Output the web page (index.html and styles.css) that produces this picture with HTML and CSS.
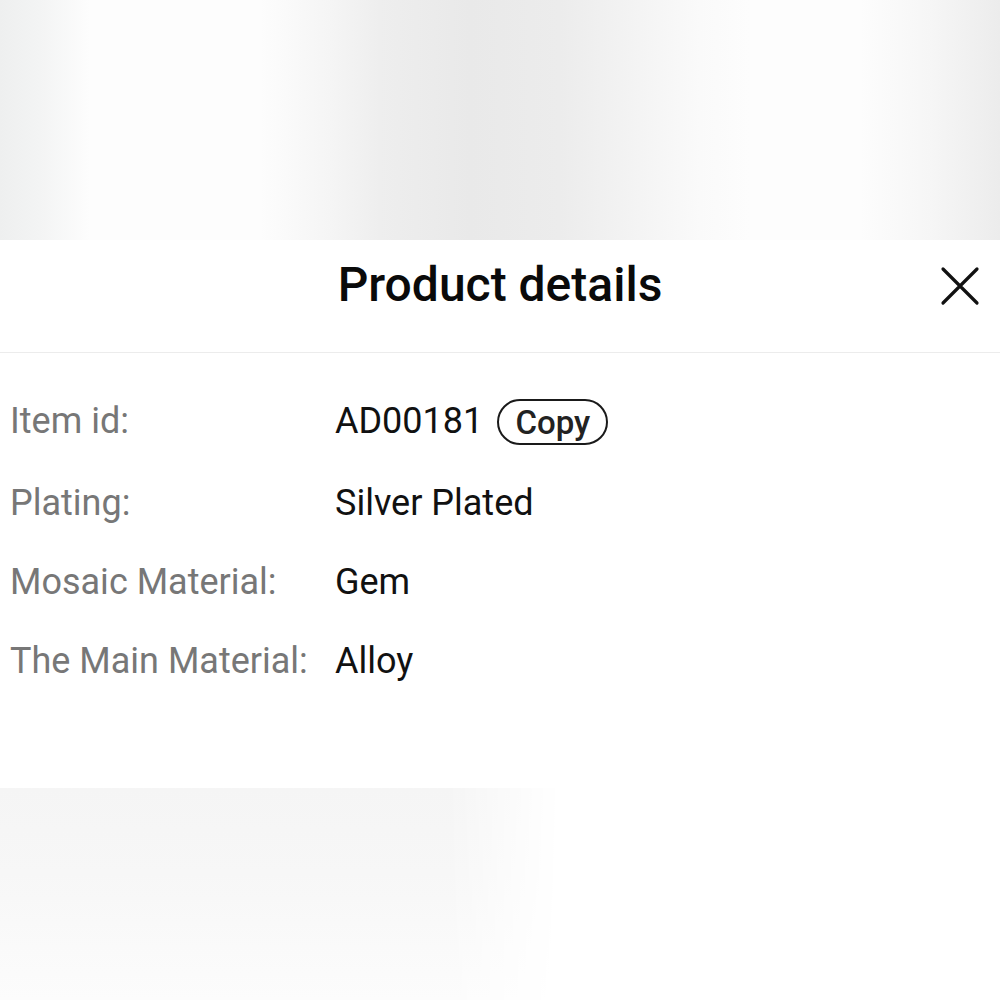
FILE: index.html
```html
<!DOCTYPE html>
<html lang="en">
<head>
<meta charset="utf-8">
<title>Product details</title>
<link rel="stylesheet" href="styles.css">
</head>
<body>
<div class="backdrop-top"></div>
<section class="sheet">
  <header class="sheet-header">
    <h1 class="sheet-title">Product details</h1>
    <button class="close-btn" aria-label="Close">
      <svg viewBox="0 0 40 40" width="40" height="40"><path d="M3 3 L37 37 M37 3 L3 37" stroke="#111" stroke-width="3.2" stroke-linecap="round" fill="none"/></svg>
    </button>
  </header>
  <dl class="details">
    <div class="row row-id">
      <dt class="label">Item id:</dt>
      <dd class="value">AD00181<span class="copy-pill">Copy</span></dd>
    </div>
    <div class="row">
      <dt class="label">Plating:</dt>
      <dd class="value">Silver Plated</dd>
    </div>
    <div class="row">
      <dt class="label">Mosaic Material:</dt>
      <dd class="value">Gem</dd>
    </div>
    <div class="row">
      <dt class="label">The Main Material:</dt>
      <dd class="value">Alloy</dd>
    </div>
  </dl>
</section>
<div class="backdrop-bottom"><div class="blob"></div></div>
</body>
</html>
```
FILE: styles.css
```css
html, body {
  margin: 0;
  padding: 0;
}
body {
  width: 1000px;
  height: 1000px;
  overflow: hidden;
  font-family: Roboto, "Liberation Sans", sans-serif;
  background: #ffffff;
  display: flex;
  flex-direction: column;
}
.backdrop-top {
  height: 240px;
  flex: none;
  background: linear-gradient(to right,
    #eeefef 0px, #f3f4f4 40px, #fdfdfd 90px, #fdfdfd 260px,
    #f5f5f5 330px, #eeeeee 380px, #e9e9e9 470px, #ececec 560px,
    #f2f2f2 620px, #fafafa 700px, #fdfdfd 750px, #fdfdfd 860px,
    #f6f6f6 930px, #ececec 1000px);
}
.sheet {
  height: 548px;
  flex: none;
  background: #ffffff;
  display: flex;
  flex-direction: column;
}
.sheet-header {
  height: 113px;
  flex: none;
  box-sizing: border-box;
  padding-bottom: 23px;
  display: flex;
  align-items: center;
  justify-content: center;
  border-bottom: 1px solid #ececec;
  position: relative;
}
.sheet-title {
  margin: 0;
  font-size: 48px;
  font-weight: 500;
  color: #0a0a0a;
  line-height: 1;
}
.close-btn {
  position: absolute;
  right: 20px;
  top: 26px;
  width: 40px;
  height: 40px;
  padding: 0;
  border: 0;
  background: transparent;
  display: flex;
}
.details {
  margin: 0;
  padding: 27px 0 0 10px;
}
.row {
  display: grid;
  grid-template-columns: 325px 1fr;
  height: 79px;
  line-height: 79px;
  font-size: 36px;
}
.row-id {
  height: 84px;
  line-height: 82px;
}
.label {
  margin: 0;
  color: #777777;
}
.value {
  margin: 0;
  color: #111111;
}
.copy-pill {
  display: inline-flex;
  align-items: center;
  justify-content: center;
  box-sizing: border-box;
  width: 111px;
  height: 46px;
  margin-left: 14px;
  border: 2px solid #1a1a1a;
  border-radius: 23px;
  font-size: 33px;
  font-weight: 500;
  line-height: 1;
  color: #222222;
  vertical-align: middle;
  position: relative;
  top: -1px;
}
.backdrop-bottom {
  flex: 1;
  background: #ffffff;
}
.blob {
  width: 560px;
  height: 212px;
  background: linear-gradient(to bottom, #f5f5f5 0%, #f7f7f7 40%, #fafafa 75%, #fcfcfc 100%);
  -webkit-mask-image: linear-gradient(to right, #000 80%, transparent 100%);
          mask-image: linear-gradient(to right, #000 80%, transparent 100%);
}
```
